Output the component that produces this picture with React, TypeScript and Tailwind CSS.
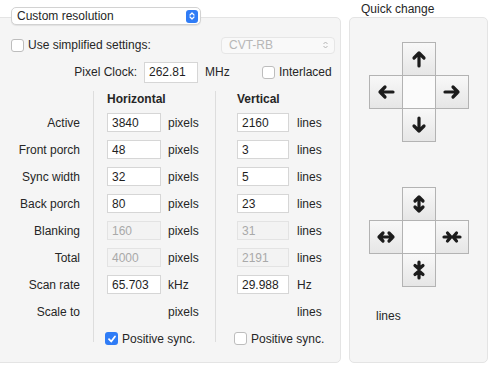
const Check = ({ checked = false }: { checked?: boolean }) =>
  checked ? (
    <span className="w-[13px] h-[13px] rounded-[3px] bg-[#2f7cf6] flex items-center justify-center shrink-0">
      <svg width="10" height="10" viewBox="0 0 10 10">
        <path d="M2 5.2 L4.2 7.5 L8 2.5" fill="none" stroke="white" strokeWidth="1.8" strokeLinecap="round" strokeLinejoin="round" />
      </svg>
    </span>
  ) : (
    <span className="w-[13px] h-[13px] rounded-[3px] bg-white border border-[#bdbdbd] shrink-0" />
  );

const Field = ({ value, disabled = false, w = "w-[54px]" }: { value: string; disabled?: boolean; w?: string }) => (
  <div
    className={`${w} h-[19px] flex items-center px-[4px] border ${
      disabled ? "bg-[#f3f3f3] border-[#e3e3e3] text-[#a9a9a9]" : "bg-white border-[#d6d6d6] text-[#1f1f1f]"
    }`}
  >
    {value}
  </div>
);

const Arrow = ({ kind }: { kind: string }) => {
  const paths: Record<string, string> = {
    up: "M10 17 V4 M5 9 L10 4 L15 9",
    down: "M10 3 V16 M5 11 L10 16 L15 11",
    left: "M17 10 H4 M9 5 L4 10 L9 15",
    right: "M3 10 H16 M11 5 L16 10 L11 15",
    vexp: "M10 3 V17 M6 7 L10 3 L14 7 M6 13 L10 17 L14 13",
    hexp: "M3 10 H17 M7 6 L3 10 L7 14 M13 6 L17 10 L13 14",
    hcmp: "M2 10 H8.5 M5.5 6 L9 10 L5.5 14 M18 10 H11.5 M14.5 6 L11 10 L14.5 14",
    vcmp: "M10 2 V8.5 M6 5.5 L10 9 L14 5.5 M10 18 V11.5 M6 14.5 L10 11 L14 14.5",
  };
  return (
    <svg width="20" height="20" viewBox="0 0 20 20">
      <path d={paths[kind]} fill="none" stroke="#1c1c1c" strokeWidth="3.2" strokeLinecap="round" strokeLinejoin="round" />
    </svg>
  );
};

const Cell = ({ kind }: { kind?: string }) => (
  <div
    className={`w-[34px] h-[34px] border border-[#b3b3b3] flex items-center justify-center ${
      kind ? "bg-gradient-to-b from-[#f8f8f8] to-[#e6e6e6]" : "bg-[#fbfbfb]"
    }`}
  >
    {kind && <Arrow kind={kind} />}
  </div>
);

const Pad = ({ up, left, right, down }: { up: string; left: string; right: string; down: string }) => (
  <div className="grid grid-cols-[33px_33px_34px] grid-rows-[33px_33px_34px]">
    <div />
    <Cell kind={up} />
    <div />
    <Cell kind={left} />
    <Cell />
    <Cell kind={right} />
    <div />
    <Cell kind={down} />
    <div />
  </div>
);

export default function App() {
  const rows = [
    { label: "Active", h: "3840", v: "2160", hu: "pixels", vu: "lines" },
    { label: "Front porch", h: "48", v: "3", hu: "pixels", vu: "lines" },
    { label: "Sync width", h: "32", v: "5", hu: "pixels", vu: "lines" },
    { label: "Back porch", h: "80", v: "23", hu: "pixels", vu: "lines" },
    { label: "Blanking", h: "160", v: "31", hu: "pixels", vu: "lines", off: true },
    { label: "Total", h: "4000", v: "2191", hu: "pixels", vu: "lines", off: true },
    { label: "Scan rate", h: "65.703", v: "29.988", hu: "kHz", vu: "Hz" },
    { label: "Scale to", h: "", v: "", hu: "pixels", vu: "lines", none: true },
  ];

  return (
    <div className="w-[489px] h-[375px] bg-white flex items-start overflow-hidden font-['Liberation_Sans',Arial,sans-serif] text-[12px] text-[#262626]">
      {/* left box */}
      <div className="-ml-[8px] mt-[17px] w-[349px] h-[346px] shrink-0 bg-[#f5f5f5] border border-[#e4e4e4] rounded-[5px] pl-[18px] flex flex-col">
        <div className="-mt-[11px] w-[190px] h-[18px] bg-white border border-[#d2d2d2] rounded-[5px] shadow-[0_1px_1px_rgba(0,0,0,0.08)] flex items-center justify-between pl-[5px] pr-[2px]">
          <span>Custom resolution</span>
          <span className="w-[12px] h-[13px] rounded-[3px] bg-[#2f7cf6] flex items-center justify-center">
            <svg width="8" height="10" viewBox="0 0 8 10">
              <path d="M2 4 L4 2 L6 4 M2 6 L4 8 L6 6" fill="none" stroke="white" strokeWidth="1.2" strokeLinecap="round" strokeLinejoin="round" />
            </svg>
          </span>
        </div>

        <div className="mt-[11px] h-[18px] flex items-center">
          <div className="w-[210px] flex items-center gap-[4px]">
            <Check />
            <span>Use simplified settings:</span>
          </div>
          <div className="w-[114px] h-[17px] bg-[#f9f9f9] border border-[#e6e6e6] rounded-[4px] flex items-center justify-between pl-[7px] pr-[5px] text-[#b7b7b7]">
            <span>CVT-RB</span>
            <svg width="7" height="10" viewBox="0 0 7 10">
              <path d="M1.5 4 L3.5 2 L5.5 4 M1.5 6 L3.5 8 L5.5 6" fill="none" stroke="#b5b5b5" strokeWidth="1" />
            </svg>
          </div>
        </div>

        <div className="mt-[8px] h-[20px] flex items-center">
          <span className="w-[126px] text-right">Pixel Clock:</span>
          <div className="ml-[7px] w-[54px] h-[21px] bg-white border border-[#d6d6d6] flex items-center px-[4px] text-[#1f1f1f]">262.81</div>
          <span className="ml-[7px] w-[57px]">MHz</span>
          <Check />
          <span className="ml-[4px]">Interlaced</span>
        </div>

        <div className="mt-[9px] flex items-start">
          <div className="w-[82px] pr-[13px] text-right flex flex-col">
            <div className="h-[18px] shrink-0" />
            {rows.map((r) => (
              <div key={r.label} className="h-[27px] shrink-0 flex items-center justify-end">
                {r.label}
              </div>
            ))}
          </div>

          <div className="w-[122px] h-[251px] border-l border-[#dddddd] pl-[13px] flex flex-col">
            <div className="h-[18px] shrink-0 pb-[3px] flex items-center font-bold">Horizontal</div>
            {rows.map((r) => (
              <div key={r.label} className="h-[27px] shrink-0 flex items-center">
                {r.none ? <div className="w-[54px]" /> : <Field value={r.h} disabled={r.off} />}
                <span className="ml-[7px]">{r.hu}</span>
              </div>
            ))}
            <div className="h-[27px] shrink-0 -ml-[2px] flex items-center gap-[4px]">
              <Check checked />
              <span>Positive sync.</span>
            </div>
          </div>

          <div className="w-[122px] h-[251px] border-l border-[#dddddd] pl-[21px] flex flex-col">
            <div className="h-[18px] shrink-0 pb-[3px] flex items-center font-bold">Vertical</div>
            {rows.map((r) => (
              <div key={r.label} className="h-[27px] shrink-0 flex items-center">
                {r.none ? <div className="w-[52px]" /> : <Field value={r.v} disabled={r.off} w="w-[52px]" />}
                <span className="ml-[8px]">{r.vu}</span>
              </div>
            ))}
            <div className="h-[27px] shrink-0 -ml-[3px] flex items-center gap-[4px]">
              <Check />
              <span>Positive sync.</span>
            </div>
          </div>
        </div>
      </div>

      {/* quick change */}
      <div className="ml-[8px] flex flex-col">
        <div className="h-[17px] pl-[12px] flex items-center">Quick change</div>
        <div className="w-[139px] h-[346px] bg-[#f5f5f5] border border-[#e4e4e4] rounded-[5px] pl-[19px] pt-[24px] flex flex-col">
          <Pad up="up" left="left" right="right" down="down" />
          <div className="mt-[45px]">
            <Pad up="vexp" left="hexp" right="hcmp" down="vcmp" />
          </div>
          <div className="mt-[20px] pl-[7px]">lines</div>
        </div>
      </div>
    </div>
  );
}
